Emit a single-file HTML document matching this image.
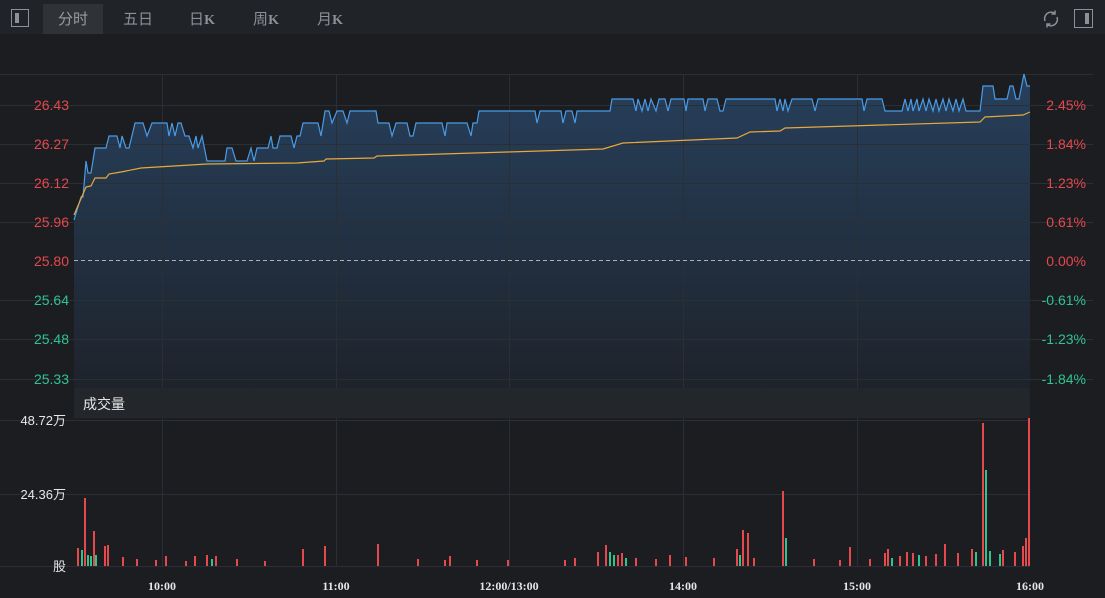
<!DOCTYPE html>
<html><head><meta charset="utf-8"><style>
html,body{margin:0;padding:0;width:1105px;height:598px;overflow:hidden;background:#1b1d21;font-family:"Liberation Sans","Noto Sans CJK SC",sans-serif}
.top{position:absolute;left:0;top:0;width:1105px;height:34px;background:#202327}
.tab{position:absolute;top:4px;height:30px;line-height:30px;font-size:15px;color:#8d9096;text-align:center;font-family:"Noto Sans CJK SC",sans-serif}
.tab b{font-family:"Liberation Serif",serif;font-weight:bold;font-size:14px}
.lab{position:absolute;font-size:14px;line-height:16px}
.r{color:#e5484d}.g{color:#2fc48d}.w{color:#e6e6e6}
</style></head><body>
<div class="top"></div>
<div style="position:absolute;left:11px;top:9px;width:18px;height:18px;border:1px solid #8d9096;box-sizing:border-box"><div style="position:absolute;left:3px;top:3px;width:4px;height:10px;background:#8d9096"></div></div>
<div class="tab" style="left:43px;width:60px;background:#2f3237;color:#9a9ca1">分时</div>
<div class="tab" style="left:108px;width:60px">五日</div>
<div class="tab" style="left:172px;width:60px">日<b>K</b></div>
<div class="tab" style="left:236px;width:60px">周<b>K</b></div>
<div class="tab" style="left:300px;width:60px">月<b>K</b></div>
<svg style="position:absolute;left:1040px;top:8px" width="22" height="22" viewBox="0 0 22 22" fill="none" stroke="#8d9096" stroke-width="1.5"><path d="M5 13a6.5 6.5 0 0 1 10-7.5M17 9a6.5 6.5 0 0 1-10 7.5"/><path d="M15 2.5v3.5h-3.5M7 19.5v-3.5h3.5"/></svg>
<div style="position:absolute;left:1074px;top:9px;width:19px;height:19px;border:1px solid #8d9096;box-sizing:border-box"><div style="position:absolute;right:3px;top:3px;width:4px;height:11px;background:#8d9096"></div></div>

<svg style="position:absolute;left:0;top:0" width="1105" height="598">
<defs><linearGradient id="gf" x1="0" y1="0" x2="0" y2="1"><stop offset="0" stop-color="#27405c"/><stop offset="1" stop-color="#1e232b"/></linearGradient></defs>
<polygon fill="url(#gf)" points="74,388 74,220 81,197 83,197 86,161 88,173 91,173 95,148 106,148 109,136 117,136 120,148 122,136 126,148 129,148 135,123 143,123 147,136 152,123 167,123 169,136 172,123 175,136 178,123 181,123 185,136 189,136 193,148 196,136 198,148 202,136 207,161 225,161 227,148 232,148 236,161 247,161 251,148 254,161 257,148 268,148 271,136 273,148 277,148 280,136 291,136 294,148 297,136 300,136 303,123 318,123 321,136 325,111 329,111 332,123 337,111 343,111 347,123 350,111 376,111 378,123 389,123 392,136 396,123 407,123 410,136 413,136 416,123 442,123 445,136 447,123 467,123 471,136 473,123 477,123 479,111 535,111 537,123 540,111 561,111 563,123 566,111 572,111 575,123 577,111 610,111 612,99 633,99 636,111 638,99 642,111 645,99 648,111 651,99 656,111 659,99 665,99 668,111 671,99 684,99 686,111 688,99 703,99 705,111 708,99 717,99 720,111 723,111 726,99 775,99 777,111 780,99 783,111 785,99 788,111 792,99 812,99 815,111 818,99 862,99 864,111 867,99 882,99 885,111 902,111 905,99 908,111 911,99 913,111 917,99 919,111 923,99 926,111 929,99 933,111 936,99 939,111 943,99 946,111 949,99 953,111 956,99 959,111 963,99 966,111 980,111 983,86 993,86 995,99 1007,99 1010,86 1013,86 1016,99 1019,99 1024,74 1027,86 1030,86 1030,388"/>
<g stroke="#2a2e35" stroke-width="1">
<line x1="0" y1="74.5" x2="1093" y2="74.5"/><line x1="0" y1="105.5" x2="1093" y2="105.5"/><line x1="0" y1="144.5" x2="1093" y2="144.5"/><line x1="0" y1="183.5" x2="1093" y2="183.5"/><line x1="0" y1="222.5" x2="1093" y2="222.5"/><line x1="0" y1="300.5" x2="1093" y2="300.5"/><line x1="0" y1="339.5" x2="1093" y2="339.5"/><line x1="0" y1="379.5" x2="1093" y2="379.5"/>
<line x1="0" y1="420.5" x2="1030" y2="420.5"/><line x1="0" y1="494.5" x2="1030" y2="494.5"/><line x1="0" y1="566.5" x2="1030" y2="566.5"/>
<line x1="162.5" y1="74" x2="162.5" y2="388"/><line x1="336.5" y1="74" x2="336.5" y2="388"/><line x1="509.5" y1="74" x2="509.5" y2="388"/><line x1="683.5" y1="74" x2="683.5" y2="388"/><line x1="857.5" y1="74" x2="857.5" y2="388"/>
<line x1="162.5" y1="418" x2="162.5" y2="566"/><line x1="336.5" y1="418" x2="336.5" y2="566"/><line x1="509.5" y1="418" x2="509.5" y2="566"/><line x1="683.5" y1="418" x2="683.5" y2="566"/><line x1="857.5" y1="418" x2="857.5" y2="566"/>
</g>
<line x1="74" y1="260.5" x2="1030" y2="260.5" stroke="#aab0b8" stroke-dasharray="4,3"/>
<polyline fill="none" stroke="#4a9be6" stroke-width="1.2" points="74,220 81,197 83,197 86,161 88,173 91,173 95,148 106,148 109,136 117,136 120,148 122,136 126,148 129,148 135,123 143,123 147,136 152,123 167,123 169,136 172,123 175,136 178,123 181,123 185,136 189,136 193,148 196,136 198,148 202,136 207,161 225,161 227,148 232,148 236,161 247,161 251,148 254,161 257,148 268,148 271,136 273,148 277,148 280,136 291,136 294,148 297,136 300,136 303,123 318,123 321,136 325,111 329,111 332,123 337,111 343,111 347,123 350,111 376,111 378,123 389,123 392,136 396,123 407,123 410,136 413,136 416,123 442,123 445,136 447,123 467,123 471,136 473,123 477,123 479,111 535,111 537,123 540,111 561,111 563,123 566,111 572,111 575,123 577,111 610,111 612,99 633,99 636,111 638,99 642,111 645,99 648,111 651,99 656,111 659,99 665,99 668,111 671,99 684,99 686,111 688,99 703,99 705,111 708,99 717,99 720,111 723,111 726,99 775,99 777,111 780,99 783,111 785,99 788,111 792,99 812,99 815,111 818,99 862,99 864,111 867,99 882,99 885,111 902,111 905,99 908,111 911,99 913,111 917,99 919,111 923,99 926,111 929,99 933,111 936,99 939,111 943,99 946,111 949,99 953,111 956,99 959,111 963,99 966,111 980,111 983,86 993,86 995,99 1007,99 1010,86 1013,86 1016,99 1019,99 1024,74 1027,86 1030,86"/>
<polyline fill="none" stroke="#e8a93a" stroke-width="1.2" points="74,215 86,187 91,186 95,178 106,178 109,174 121,172 141,168 174,166 207,164 297,163 324,161 326,159 374,158 377,156 507,152 603,149 623,143 737,138 750,132 780,131 785,128 980,122 985,117 1023,115 1030,112"/>
<rect x="74" y="388" width="956" height="30" fill="#23262b"/>
<g stroke-width="2">
<g stroke="#e5484d">
<line x1="78" y1="566" x2="78" y2="548"/><line x1="85" y1="566" x2="85" y2="498"/><line x1="94" y1="566" x2="94" y2="531"/><line x1="105" y1="566" x2="105" y2="546"/><line x1="108" y1="566" x2="108" y2="545"/><line x1="123" y1="566" x2="123" y2="557"/><line x1="137" y1="566" x2="137" y2="559"/><line x1="156" y1="566" x2="156" y2="560"/><line x1="166" y1="566" x2="166" y2="556"/><line x1="186" y1="566" x2="186" y2="561"/><line x1="195" y1="566" x2="195" y2="556"/><line x1="207" y1="566" x2="207" y2="555"/><line x1="216" y1="566" x2="216" y2="556"/><line x1="237" y1="566" x2="237" y2="559"/><line x1="265" y1="566" x2="265" y2="561"/><line x1="303" y1="566" x2="303" y2="549"/><line x1="325" y1="566" x2="325" y2="546"/><line x1="378" y1="566" x2="378" y2="544"/><line x1="418" y1="566" x2="418" y2="559"/><line x1="445" y1="566" x2="445" y2="560"/><line x1="450" y1="566" x2="450" y2="556"/><line x1="477" y1="566" x2="477" y2="560"/><line x1="508" y1="566" x2="508" y2="560"/><line x1="565" y1="566" x2="565" y2="560"/><line x1="575" y1="566" x2="575" y2="558"/><line x1="598" y1="566" x2="598" y2="552"/><line x1="606" y1="566" x2="606" y2="545"/><line x1="618" y1="566" x2="618" y2="555"/><line x1="622" y1="566" x2="622" y2="553"/><line x1="636" y1="566" x2="636" y2="558"/><line x1="656" y1="566" x2="656" y2="559"/><line x1="670" y1="566" x2="670" y2="555"/><line x1="686" y1="566" x2="686" y2="557"/><line x1="714" y1="566" x2="714" y2="558"/><line x1="737" y1="566" x2="737" y2="549"/><line x1="743" y1="566" x2="743" y2="530"/><line x1="748" y1="566" x2="748" y2="533"/><line x1="754" y1="566" x2="754" y2="558"/><line x1="783" y1="566" x2="783" y2="491"/><line x1="814" y1="566" x2="814" y2="559"/><line x1="840" y1="566" x2="840" y2="560"/><line x1="850" y1="566" x2="850" y2="547"/><line x1="870" y1="566" x2="870" y2="559"/><line x1="885" y1="566" x2="885" y2="553"/><line x1="888" y1="566" x2="888" y2="549"/><line x1="900" y1="566" x2="900" y2="556"/><line x1="907" y1="566" x2="907" y2="552"/><line x1="913" y1="566" x2="913" y2="553"/><line x1="926" y1="566" x2="926" y2="556"/><line x1="936" y1="566" x2="936" y2="554"/><line x1="945" y1="566" x2="945" y2="544"/><line x1="958" y1="566" x2="958" y2="553"/><line x1="972" y1="566" x2="972" y2="549"/><line x1="983" y1="566" x2="983" y2="423"/><line x1="1003" y1="566" x2="1003" y2="550"/><line x1="1015" y1="566" x2="1015" y2="552"/><line x1="1023" y1="566" x2="1023" y2="546"/><line x1="1026" y1="566" x2="1026" y2="538"/><line x1="1029" y1="566" x2="1029" y2="418"/>
</g>
<g stroke="#2fc48d">
<line x1="82" y1="566" x2="82" y2="550"/><line x1="88" y1="566" x2="88" y2="555"/><line x1="91" y1="566" x2="91" y2="556"/><line x1="96" y1="566" x2="96" y2="555"/><line x1="212" y1="566" x2="212" y2="559"/><line x1="610" y1="566" x2="610" y2="552"/><line x1="614" y1="566" x2="614" y2="555"/><line x1="626" y1="566" x2="626" y2="558"/><line x1="740" y1="566" x2="740" y2="555"/><line x1="786" y1="566" x2="786" y2="538"/><line x1="892" y1="566" x2="892" y2="558"/><line x1="919" y1="566" x2="919" y2="555"/><line x1="976" y1="566" x2="976" y2="552"/><line x1="986" y1="566" x2="986" y2="470"/><line x1="990" y1="566" x2="990" y2="551"/><line x1="1000" y1="566" x2="1000" y2="554"/>
</g></g>
</svg>

<div class="lab r" style="left:20px;top:97px;width:49px;text-align:right">26.43</div>
<div class="lab r" style="left:20px;top:136px;width:49px;text-align:right">26.27</div>
<div class="lab r" style="left:20px;top:175px;width:49px;text-align:right">26.12</div>
<div class="lab r" style="left:20px;top:214px;width:49px;text-align:right">25.96</div>
<div class="lab r" style="left:20px;top:253px;width:49px;text-align:right">25.80</div>
<div class="lab g" style="left:20px;top:292px;width:49px;text-align:right">25.64</div>
<div class="lab g" style="left:20px;top:331px;width:49px;text-align:right">25.48</div>
<div class="lab g" style="left:20px;top:371px;width:49px;text-align:right">25.33</div>
<div class="lab r" style="left:1036px;top:97px;width:50px;text-align:right">2.45%</div>
<div class="lab r" style="left:1036px;top:136px;width:50px;text-align:right">1.84%</div>
<div class="lab r" style="left:1036px;top:175px;width:50px;text-align:right">1.23%</div>
<div class="lab r" style="left:1036px;top:214px;width:50px;text-align:right">0.61%</div>
<div class="lab r" style="left:1036px;top:253px;width:50px;text-align:right">0.00%</div>
<div class="lab g" style="left:1030px;top:292px;width:56px;text-align:right">-0.61%</div>
<div class="lab g" style="left:1030px;top:331px;width:56px;text-align:right">-1.23%</div>
<div class="lab g" style="left:1030px;top:371px;width:56px;text-align:right">-1.84%</div>
<div class="lab w" style="left:83px;top:395px;font-size:14px;font-family:'Noto Sans CJK SC',sans-serif;line-height:18px">成交量</div>
<div class="lab w" style="left:10px;top:413px;width:56px;text-align:right;font-size:13px">48.72万</div>
<div class="lab w" style="left:10px;top:487px;width:56px;text-align:right;font-size:13px">24.36万</div>
<div class="lab w" style="left:40px;top:559px;width:26px;text-align:right;font-size:13px">股</div>
<div class="lab w" style="left:142px;top:578px;width:40px;text-align:center;font-size:12px;font-family:'Liberation Serif',serif;font-weight:bold">10:00</div>
<div class="lab w" style="left:316px;top:578px;width:40px;text-align:center;font-size:12px;font-family:'Liberation Serif',serif;font-weight:bold">11:00</div>
<div class="lab w" style="left:469px;top:578px;width:80px;text-align:center;font-size:12px;font-family:'Liberation Serif',serif;font-weight:bold">12:00/13:00</div>
<div class="lab w" style="left:663px;top:578px;width:40px;text-align:center;font-size:12px;font-family:'Liberation Serif',serif;font-weight:bold">14:00</div>
<div class="lab w" style="left:837px;top:578px;width:40px;text-align:center;font-size:12px;font-family:'Liberation Serif',serif;font-weight:bold">15:00</div>
<div class="lab w" style="left:1010px;top:578px;width:40px;text-align:center;font-size:12px;font-family:'Liberation Serif',serif;font-weight:bold">16:00</div>
</body></html>
